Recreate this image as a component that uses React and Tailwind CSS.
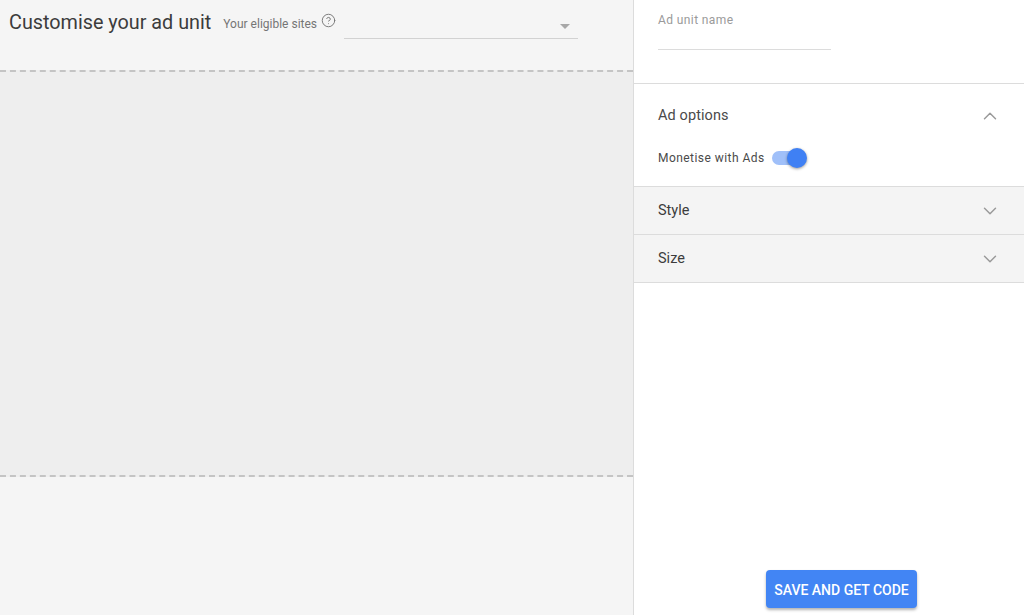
import React from 'react';
import { ChevronUp, ChevronDown, CircleHelp } from 'lucide-react';

function CollapsedRow({ label }) {
  return (
    <div className="flex h-12 items-center justify-between border-b border-[#dcdcdc] bg-[#f4f4f4] pl-6 pr-[23px]">
      <span className="text-[14.5px] text-[#3c3c3c]">{label}</span>
      <ChevronDown size={22} strokeWidth={1.6} className="text-[#9a9a9a]" />
    </div>
  );
}

export default function App() {
  return (
    <div className="flex h-[615px] w-[1024px] overflow-hidden bg-white font-['Roboto',sans-serif]">
      <div className="flex w-[633px] flex-col bg-[#f5f5f5]">
        <div className="flex h-[70px] items-start pl-[9px]">
          <h1 className="mt-[10px] text-[19.8px] leading-[26px] text-[#3c3c3c]">Customise your ad unit</h1>
          <span className="ml-3 mt-[16px] text-xs leading-4 text-[#757575]">Your eligible sites</span>
          <CircleHelp size={15} strokeWidth={1.5} className="ml-[4px] mt-[13px] text-[#757575]" />
          <div className="ml-[8px] mt-[8px] flex h-[31px] w-[234px] items-center justify-end border-b border-[#d2d2d2] pr-[8px]">
            <div className="mt-[6px] h-0 w-0 border-x-[5px] border-t-[5px] border-x-transparent border-t-[#a8a8a8]" />
          </div>
        </div>
        <div className="h-[407px] border-y-2 border-dashed border-[#c4c4c4] bg-[#eeeeee]" />
      </div>

      <div className="flex flex-1 flex-col border-l border-[#dcdcdc] bg-white">
        <div className="h-[84px] border-b border-[#dcdcdc] pl-6">
          <div className="flex h-[50px] w-[173px] border-b border-[#dcdcdc] pt-[13px]">
            <span className="text-xs leading-[14px] tracking-[0.4px] text-[#9a9a9a]">Ad unit name</span>
          </div>
        </div>

        <div className="h-[103px] border-b border-[#dcdcdc] pl-6 pr-[23px]">
          <div className="flex h-[63px] items-center justify-between">
            <span className="text-[14.5px] tracking-[0.1px] text-[#4a4a4a]">Ad options</span>
            <ChevronUp size={22} strokeWidth={1.6} className="text-[#9a9a9a]" />
          </div>
          <div className="mt-px flex items-center">
            <span className="text-xs leading-5 tracking-[0.45px] text-[#4a4a4a]">Monetise with Ads</span>
            <div className="relative ml-[7px] h-[14px] w-[30px] rounded-full bg-[#a0c0f9]">
              <div className="absolute -top-[3px] left-[15px] h-5 w-5 rounded-full bg-[#3f80f4] shadow-[0_1px_3px_rgba(0,0,0,0.4)]" />
            </div>
          </div>
        </div>

        <CollapsedRow label="Style" />
        <CollapsedRow label="Size" />

        <div className="flex flex-1 items-end justify-center pb-[7px] pl-[25px]">
          <button
            type="button"
            className="h-[38px] w-[151px] rounded-sm bg-[#4285f4] pt-0.5 text-sm font-medium text-white shadow-[0_2px_3px_rgba(0,0,0,0.3)]"
          >
            SAVE AND GET CODE
          </button>
        </div>
      </div>
    </div>
  );
}
